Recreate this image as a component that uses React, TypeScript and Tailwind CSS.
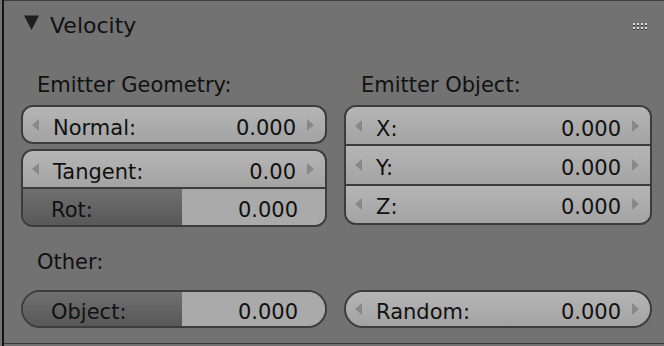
import React from 'react';

const numFill = 'bg-[linear-gradient(to_bottom,#b5b5b5,#a3a3a3)]';

function Arrow({ dir }: { dir: 'l' | 'r' }) {
  return (
    <svg width="7" height="12" viewBox="0 0 7 12" className="shrink-0">
      {dir === 'l' ? (
        <polygon points="7,0 7,12 0,6" fill="#888888" />
      ) : (
        <polygon points="0,0 0,12 7,6" fill="#888888" />
      )}
    </svg>
  );
}

function NumRow({ label, value, className = '' }: { label: string; value: string; className?: string }) {
  return (
    <div className={`flex items-center ${numFill} ${className}`}>
      <span className="ml-[9px]">
        <Arrow dir="l" />
      </span>
      <span className="ml-[14px] pt-[6px]">{label}</span>
      <span className="ml-auto pt-[6px]">{value}</span>
      <span className="ml-[11px] mr-[11px]">
        <Arrow dir="r" />
      </span>
    </div>
  );
}

function SliderRow({ label, value, className = '' }: { label: string; value: string; className?: string }) {
  return (
    <div className={`flex ${className}`}>
      <div className="w-[159px] flex items-center pl-[28px] bg-[linear-gradient(to_bottom,#707070,#585858)]">
        <span className="pt-[6px]">{label}</span>
      </div>
      <div className="flex-1 flex items-center justify-end pr-[27px] bg-[#aaaaaa]">
        <span className="pt-[6px]">{value}</span>
      </div>
    </div>
  );
}

const box = 'border-2 border-[#3c3c3c] rounded-[12px] overflow-hidden';

export default function App() {
  return (
    <div className="w-[664px] h-[346px] bg-[#727272] flex font-['DejaVu_Sans',sans-serif] text-[21px] leading-[24px] text-[#111111]">
      <div className="w-[2px]" />
      <div className="w-[2px] bg-[#151515]" />
      <div className="flex-1 flex flex-col h-[344px] border-t border-[#3e3e3e] border-b border-b-[#383838] pl-[17px] pr-[12px] pt-[12px]">
        {/* header */}
        <div className="flex h-[26px] items-start">
          <svg width="15" height="26" viewBox="0 0 15 26" className="ml-[3px] shrink-0">
            <polygon points="0,2.5 15,2.5 7.5,17" fill="#1e1e1e" />
          </svg>
          <span className="ml-[11px] text-[22px] leading-[26px]">Velocity</span>
          <svg width="14" height="26" viewBox="0 0 14 26" className="ml-auto mr-[5px] shrink-0">
            {[0, 4, 8, 12].map((x) =>
              [10, 14].map((y) => (
                <g key={`${x}-${y}`}>
                  <rect x={x} y={y} width="2" height="2" fill="#d8d8d8" />
                  <rect x={x} y={y + 2} width="2" height="1" fill="#3a3a3a" />
                </g>
              ))
            )}
          </svg>
        </div>

        {/* columns */}
        <div className="grid grid-cols-[306px_308px] gap-x-[17px] mt-[33px]">
          <div className="flex flex-col">
            <div className="pl-[16px] pt-[1px] h-[24px]">Emitter Geometry:</div>
            <div className={`${box} h-[39px] mt-[9px] flex flex-col`}>
              <NumRow label="Normal:" value="0.000" className="flex-1" />
            </div>
            <div className={`${box} h-[78px] mt-[5px] flex flex-col divide-y-2 divide-[#3c3c3c]`}>
              <NumRow label="Tangent:" value="0.00" className="flex-1" />
              <SliderRow label="Rot:" value="0.000" className="flex-1" />
            </div>
          </div>
          <div className="flex flex-col">
            <div className="pl-[17px] pt-[1px] h-[24px]">Emitter Object:</div>
            <div className={`${box} h-[120px] mt-[9px] flex flex-col divide-y-2 divide-[#3c3c3c]`}>
              <NumRow label="X:" value="0.000" className="flex-1" />
              <NumRow label="Y:" value="0.000" className="flex-1" />
              <NumRow label="Z:" value="0.000" className="flex-1" />
            </div>
          </div>
        </div>

        <div className="pl-[16px] pt-[1px] h-[24px] mt-[22px]">Other:</div>

        <div className="grid grid-cols-[306px_308px] gap-x-[17px] mt-[17px]">
          <div className={`${box} h-[38px] flex flex-col rounded-[19px]`}>
            <SliderRow label="Object:" value="0.000" className="flex-1" />
          </div>
          <div className={`${box} h-[38px] flex flex-col rounded-[19px]`}>
            <NumRow label="Random:" value="0.000" className="flex-1" />
          </div>
        </div>
      </div>
    </div>
  );
}
